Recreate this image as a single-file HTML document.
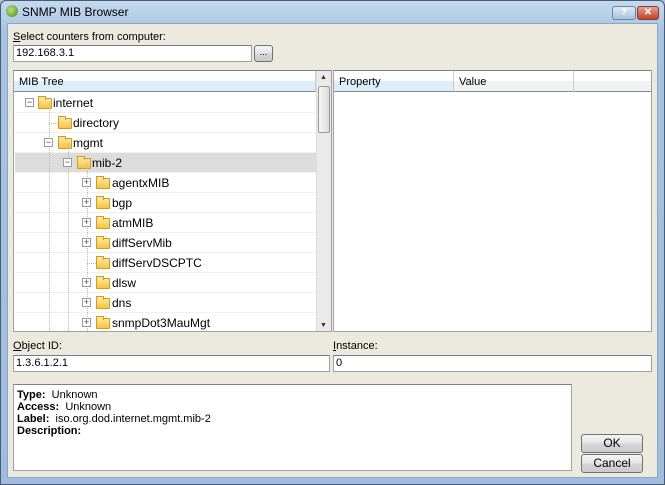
<!DOCTYPE html><html><head><style>
*{margin:0;padding:0;box-sizing:border-box}
body{width:665px;height:485px;position:relative;overflow:hidden;font-family:"Liberation Sans",sans-serif;font-size:11px;color:#000;background:#a9c4e0}
.a{position:absolute}
#win{left:0;top:0;width:665px;height:485px;background:linear-gradient(#c5d9ee,#a8c3e1 30px,#9fbde0);border:1px solid #4a5a70;border-radius:6px 6px 0 0}
#client{left:7px;top:23px;width:651px;height:455px;background:#ece9de;border:1px solid #8ea5c0}
.inp{background:#fff;border:1px solid #a0a0a0;border-top-color:#7a7a7a;height:17px;padding:1px 2px;font-size:11px}
.panel{background:#fff;border:1px solid #a0a0a0;border-top-color:#808080}
.hdr{height:21px;border-bottom:1px solid #8a8a8a;background:linear-gradient(#fff 50%,#f0f2f4 50%)}
.row{position:absolute;left:0;width:301px;height:20px;border-bottom:1px solid #f3f1e6;font-size:12px;line-height:20px}
.fold{position:absolute;width:14px;height:11px;border:1px solid #d29b1a;background:linear-gradient(#fde49a,#f7c443);border-radius:1px;top:5px}
.fold:before{content:"";position:absolute;left:-1px;top:-3px;width:6px;height:3px;border:1px solid #d29b1a;border-bottom:none;background:#fde49a}
.exp{position:absolute;width:9px;height:9px;border:1px solid #9a9a9a;background:#fff;top:5px;font-size:9px;line-height:7px;text-align:center;color:#444;z-index:2}
.t{position:absolute;top:0}
.vl{position:absolute;border-left:1px dotted #b8b8b8;width:0}
.hl{position:absolute;border-top:1px dotted #b8b8b8;height:0;top:10px}
.btn{border:1px solid #707070;border-radius:3px;background:linear-gradient(#f4f4f4,#e4e4e4 50%,#d6d6d6 51%,#cbcbcb);text-align:center;font-size:12px}
</style></head><body>
<div id="win" class="a"></div>
<div class="a" style="left:6px;top:5px;width:12px;height:12px;border-radius:50%;background:radial-gradient(circle at 40% 40%,#b9e07a,#3f8a1a);"></div>
<div class="a" style="left:22px;top:5px;font-size:12px">SNMP MIB Browser</div>
<div class="a" style="left:612px;top:6px;width:24px;height:14px;border:1px solid #6a86a8;border-radius:3px;background:linear-gradient(#dbe8f6,#a9c2de);color:#fff;font-size:10px;text-align:center;line-height:12px;font-weight:bold">?</div>
<div class="a" style="left:637px;top:6px;width:22px;height:14px;border:1px solid #8a3a2a;border-radius:3px;background:linear-gradient(#e8a090,#c0402a);color:#fff;font-size:10px;text-align:center;line-height:12px;font-weight:bold">✕</div>
<div id="client" class="a"></div>
<div class="a" style="left:13px;top:31px;font-size:11px"><u>S</u>elect counters from computer:</div>
<div class="a inp" style="left:13px;top:45px;width:239px">192.168.3.1</div>
<div class="a btn" style="left:254px;top:45px;width:19px;height:17px;font-size:9px;line-height:12px">...</div>

<div class="a panel" style="left:13px;top:70px;width:319px;height:262px;overflow:hidden">
 <div class="hdr" style="position:absolute;left:0;top:0;width:302px;background:linear-gradient(#fff 50%,#dbeefa 50%);border-right:1px solid #ccc;padding:5px 5px;font-size:11px">MIB Tree</div>
 <div class="a" style="left:302px;top:0;width:15px;height:260px;background:#eaeaea;border-left:1px solid #ddd"></div>
 <div class="a" style="left:306px;top:3px;font-size:7px;color:#333">▲</div>
 <div class="a" style="left:304px;top:15px;width:12px;height:47px;border:1px solid #999;border-radius:2px;background:linear-gradient(90deg,#f6f6f6,#dcdcdc)"></div>
 <div class="a" style="left:306px;top:251px;font-size:7px;color:#333">▼</div>
 <div class="a" style="left:1px;top:22px;width:301px;height:240px">
  <div class="row" style="top:0"><span class="exp" style="left:10px">−</span><span class="fold" style="left:23px"></span><span class="t" style="left:38px">internet</span></div>
  <div class="row" style="top:20px"><span class="hl" style="left:34px;width:9px"></span><span class="fold" style="left:43px"></span><span class="t" style="left:58px">directory</span></div>
  <div class="row" style="top:40px"><span class="exp" style="left:29px">−</span><span class="fold" style="left:43px"></span><span class="t" style="left:58px">mgmt</span></div>
  <div class="row" style="top:60px;background:#dcdcdc"><span class="exp" style="left:48px">−</span><span class="fold" style="left:62px"></span><span class="t" style="left:77px">mib-2</span></div>
  <div class="row" style="top:80px"><span class="exp" style="left:67px">+</span><span class="fold" style="left:81px"></span><span class="t" style="left:97px">agentxMIB</span></div>
  <div class="row" style="top:100px"><span class="exp" style="left:67px">+</span><span class="fold" style="left:81px"></span><span class="t" style="left:97px">bgp</span></div>
  <div class="row" style="top:120px"><span class="exp" style="left:67px">+</span><span class="fold" style="left:81px"></span><span class="t" style="left:97px">atmMIB</span></div>
  <div class="row" style="top:140px"><span class="exp" style="left:67px">+</span><span class="fold" style="left:81px"></span><span class="t" style="left:97px">diffServMib</span></div>
  <div class="row" style="top:160px"><span class="hl" style="left:72px;width:9px"></span><span class="fold" style="left:81px"></span><span class="t" style="left:97px">diffServDSCPTC</span></div>
  <div class="row" style="top:180px"><span class="exp" style="left:67px">+</span><span class="fold" style="left:81px"></span><span class="t" style="left:97px">dlsw</span></div>
  <div class="row" style="top:200px"><span class="exp" style="left:67px">+</span><span class="fold" style="left:81px"></span><span class="t" style="left:97px">dns</span></div>
  <div class="row" style="top:220px"><span class="exp" style="left:67px">+</span><span class="fold" style="left:81px"></span><span class="t" style="left:97px">snmpDot3MauMgt</span></div>
  <span class="vl" style="left:34px;top:10px;height:230px"></span>
  <span class="vl" style="left:53px;top:50px;height:190px"></span>
  <span class="vl" style="left:72px;top:70px;height:170px"></span>
 </div>
</div>

<div class="a panel" style="left:333px;top:70px;width:319px;height:262px">
 <div class="hdr" style="position:absolute;left:0;top:0;width:317px"></div>
 <div class="a" style="left:0;top:0;width:120px;height:21px;background:linear-gradient(#fff 50%,#dbeefa 50%);border-right:1px solid #ccc;padding:5px 5px;border-bottom:1px solid #8a8a8a">Property</div>
 <div class="a" style="left:120px;top:0;width:120px;height:21px;border-right:1px solid #ccc;padding:5px 5px">Value</div>
</div>

<div class="a" style="left:13px;top:340px"><u>O</u>bject ID:</div>
<div class="a inp" style="left:13px;top:355px;width:317px">1.3.6.1.2.1</div>
<div class="a" style="left:333px;top:340px"><u>I</u>nstance:</div>
<div class="a inp" style="left:333px;top:355px;width:319px">0</div>

<div class="a panel" style="left:13px;top:384px;width:559px;height:87px;padding:4px 3px;line-height:12px;font-size:11px">
<b>Type:</b>&nbsp; Unknown<br><b>Access:</b>&nbsp; Unknown<br><b>Label:</b>&nbsp; iso.org.dod.internet.mgmt.mib-2<br><b>Description:</b>
</div>
<div class="a btn" style="left:581px;top:434px;width:62px;height:19px;line-height:17px">OK</div>
<div class="a btn" style="left:581px;top:454px;width:62px;height:19px;line-height:17px">Cancel</div>
</body></html>
